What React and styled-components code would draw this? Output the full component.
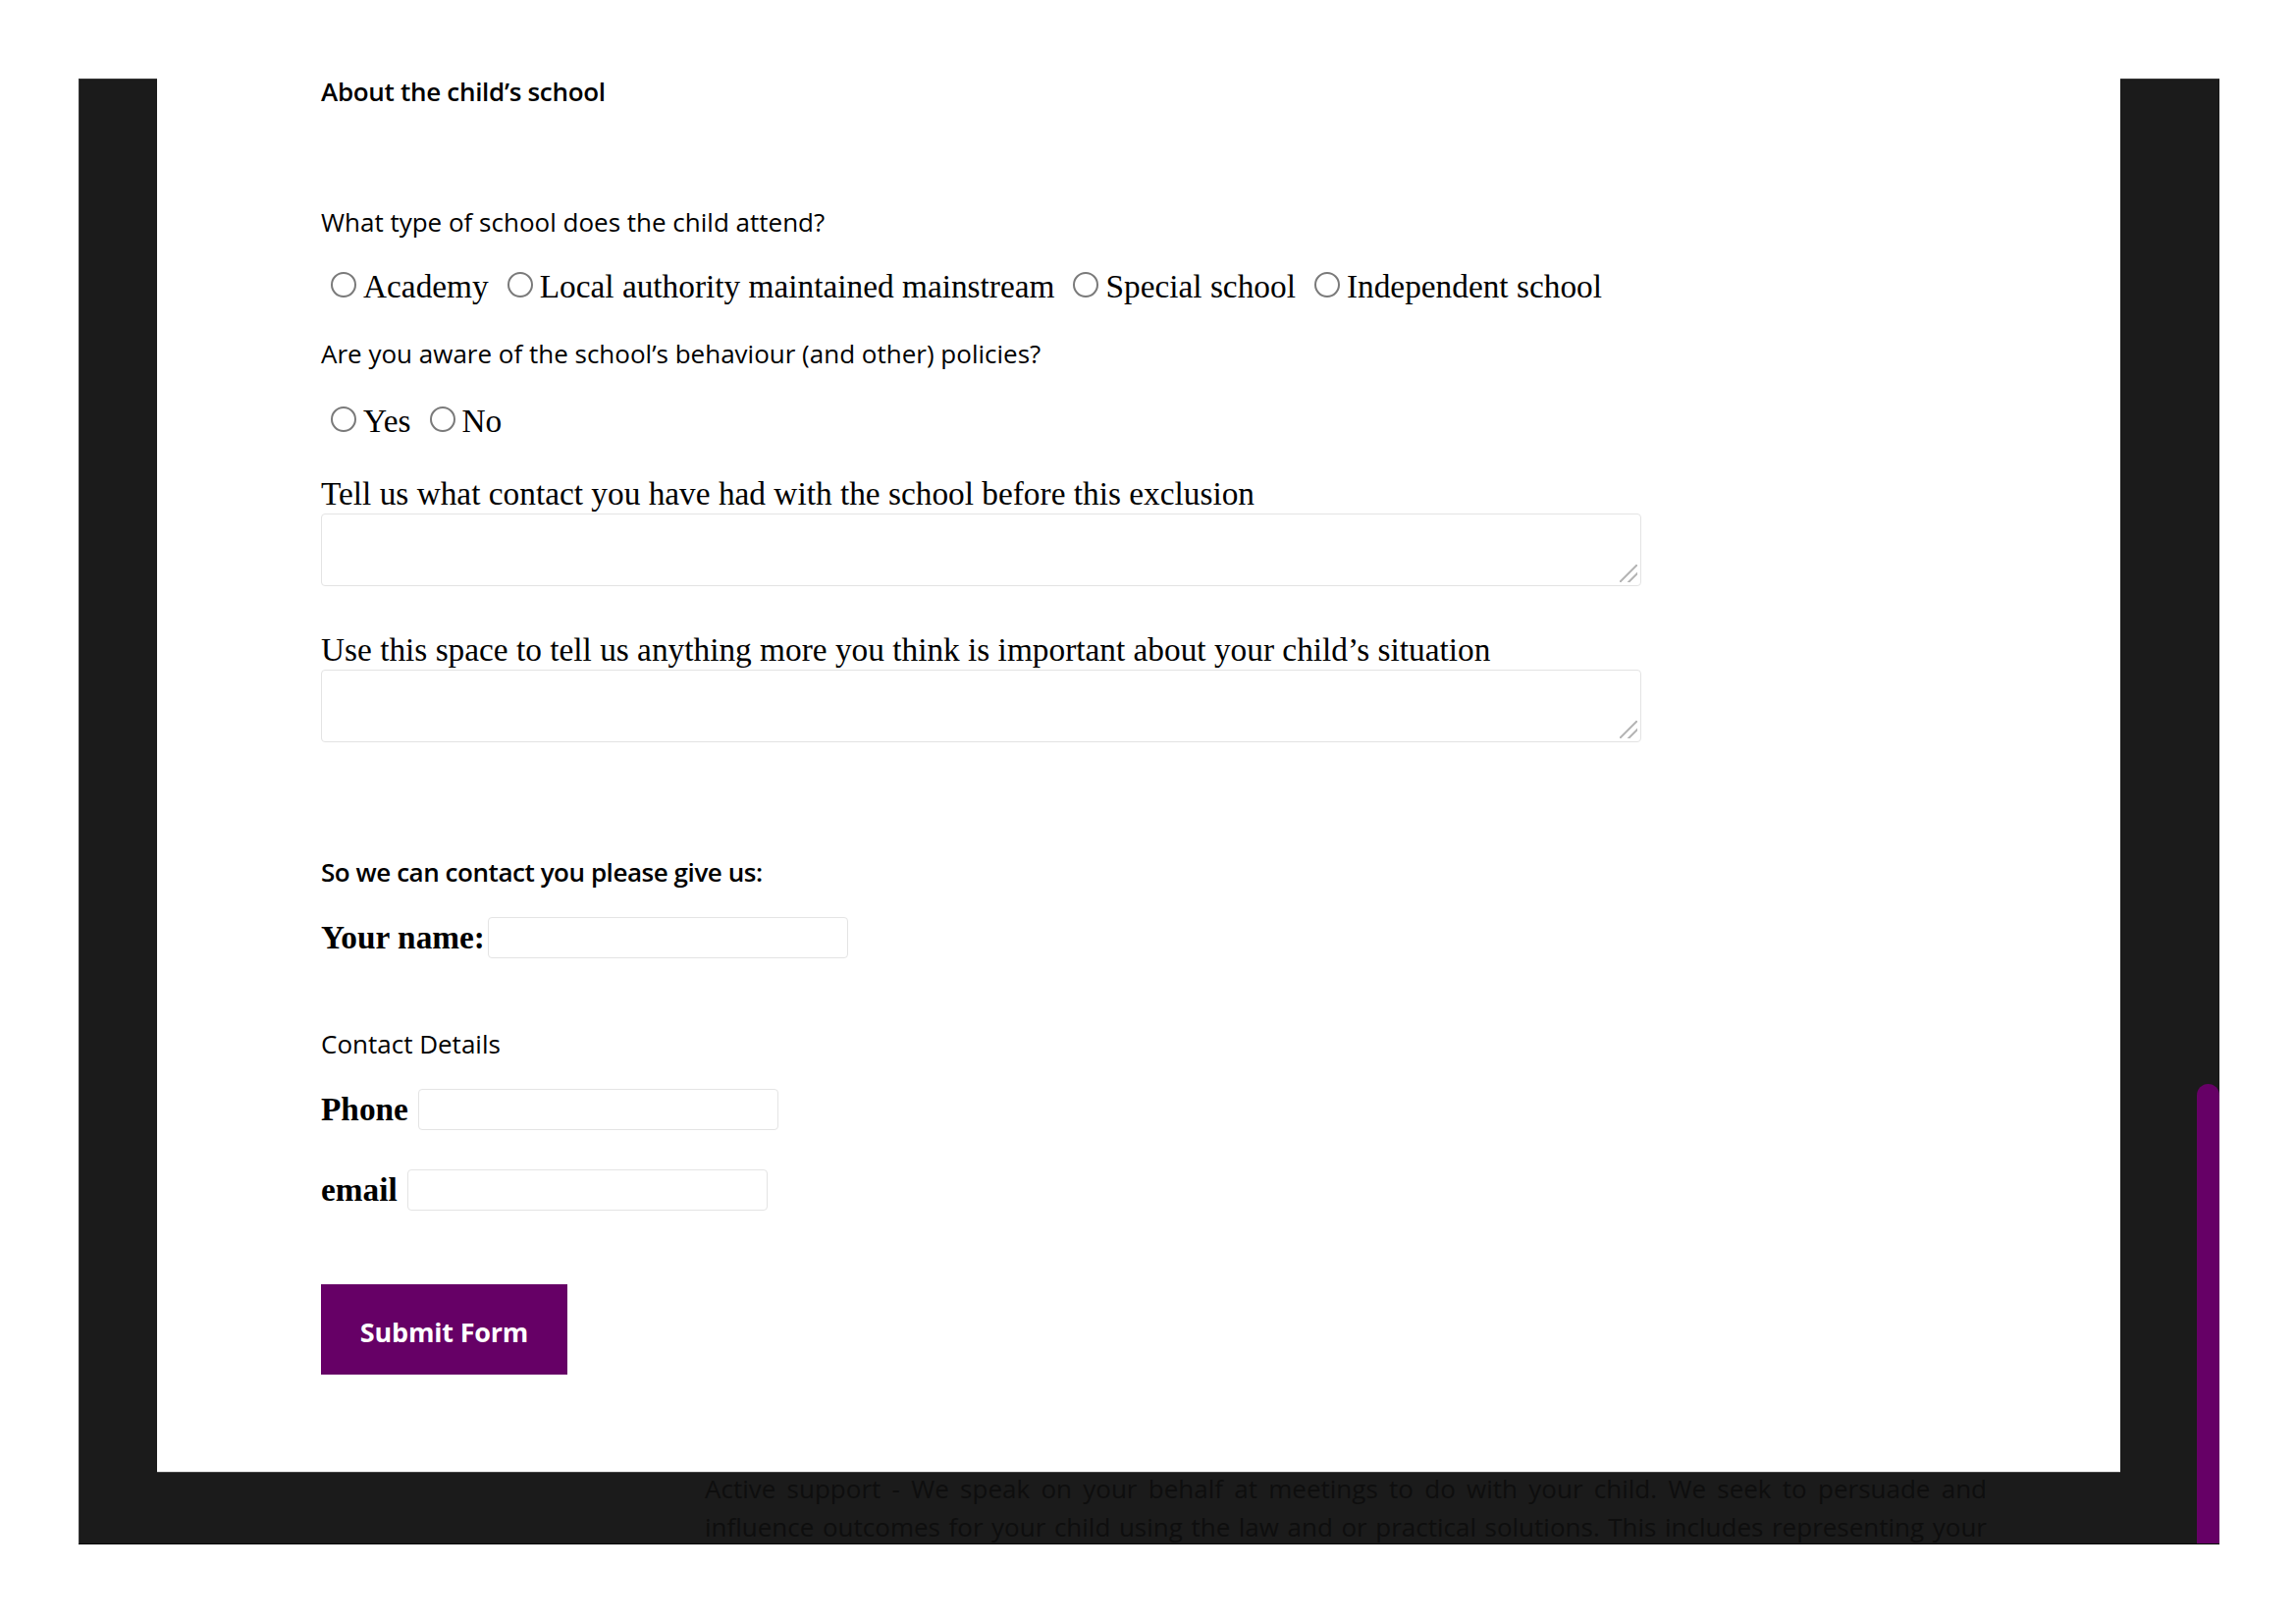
import React from "react";
import styled, { createGlobalStyle } from "styled-components";

const GlobalStyle = createGlobalStyle`
  html, body {
    margin: 0;
    padding: 0;
    background: #ffffff;
  }
  body {
    font-family: "Liberation Serif", "Times New Roman", serif;
    color: #000;
  }
  *, *::before, *::after {
    box-sizing: border-box;
  }
`;

const Page = styled.div`
  padding: 80px 0 0 80px;
  min-height: 1653px;
`;

const Frame = styled.div`
  width: 2181px;
  display: grid;
  grid-template-columns: 80px 2000px 78px 23px;
  grid-template-rows: 1419px 73px;
  background: #1b1b1b;
  border-bottom: 1px solid #050505;
  box-shadow: inset 1px 1px 0 #383838;
`;

const Panel = styled.main`
  grid-column: 2;
  grid-row: 1;
  position: relative;
  z-index: 1;
  background: #ffffff;
  box-shadow: 0 1px 0 #474747;
  padding-left: 167px;
`;

const Backdrop = styled.div`
  grid-column: 1 / 4;
  grid-row: 2;
  overflow: hidden;
  padding-left: 638px;
`;

const BackdropText = styled.p`
  margin: -2px 0 0;
  width: 1306px;
  font-family: "Open Sans", "Noto Sans", sans-serif;
  font-size: 26px;
  line-height: 39px;
  color: #0e0e0e;
`;

const JustifiedLine = styled.span`
  display: block;
  text-align: justify;
  text-align-last: justify;
  white-space: nowrap;
`;

const ScrollTrack = styled.div`
  grid-column: 4;
  grid-row: 1 / 3;
  display: flex;
  flex-direction: column;
  justify-content: flex-end;
`;

const ScrollThumb = styled.div`
  height: 468px;
  background: #660066;
  border-radius: 12px 12px 0 0;
`;

const Heading = styled.h4`
  margin: 0;
  font-family: "Open Sans", "Noto Sans", sans-serif;
  font-size: 26px;
  font-weight: 600;
  line-height: 26px;
  letter-spacing: -0.3px;
`;

const Question = styled.p`
  margin: ${(p) => p.$top}px 0 0;
  font-family: "Open Sans", "Noto Sans", sans-serif;
  font-size: 26px;
  font-weight: ${(p) => p.$weight || 400};
  letter-spacing: ${(p) => p.$tracking || 0}px;
  line-height: 36px;
`;

const OptionRow = styled.div`
  display: flex;
  gap: 9px;
  margin-top: ${(p) => p.$top}px;
  font-size: 33.33px;
  line-height: 36px;
`;

const Option = styled.label`
  display: inline-flex;
  align-items: center;
  white-space: nowrap;
`;

const Radio = styled.input.attrs({ type: "radio" })`
  appearance: none;
  -webkit-appearance: none;
  flex: none;
  width: 26px;
  height: 26px;
  margin: 0 7px 4px 10px;
  border: 2px solid #7a7a7a;
  border-radius: 50%;
  background: #fff;
`;

const Prompt = styled.label`
  display: block;
  margin-top: ${(p) => p.$top}px;
  font-size: 33.33px;
  line-height: 36px;
`;

const TextBox = styled.textarea`
  display: block;
  width: 1345px;
  height: 74px;
  margin: 2px 0 0;
  border: 1px solid #e3e3e3;
  border-radius: 4px;
  resize: none;
  background-color: #fff;
  background-image: linear-gradient(
    135deg,
    transparent 0 47%,
    #b9b9b9 47% 53%,
    transparent 53% 72%,
    #b9b9b9 72% 78%,
    transparent 78%
  );
  background-size: 18px 18px;
  background-position: right 3px bottom 3px;
  background-repeat: no-repeat;
  font: inherit;
`;

const FieldRow = styled.div`
  display: flex;
  align-items: center;
  gap: ${(p) => p.$gap}px;
  margin-top: ${(p) => p.$top}px;
`;

const FieldLabel = styled.label`
  font-size: 33.33px;
  font-weight: 700;
  line-height: 36px;
  white-space: nowrap;
`;

const TextInput = styled.input`
  width: 367px;
  height: 42px;
  margin: 0;
  border: 1px solid #e4e4e4;
  border-radius: 4px;
  background: #fff;
`;

const SubmitButton = styled.button`
  display: block;
  width: 251px;
  height: 92px;
  margin-top: 75px;
  padding: 4px 0 0;
  border: none;
  background: #660066;
  color: #ffffff;
  font-family: "Open Sans", "Noto Sans", sans-serif;
  font-size: 27px;
  font-weight: 700;
  letter-spacing: -0.2px;
`;

export default function App() {
  return (
    <>
      <GlobalStyle />
      <Page>
        <Frame>
          <Panel>
            <Heading>About the child’s school</Heading>
            <Question $top={102}>What type of school does the child attend?</Question>
            <OptionRow $top={30}>
              <Option><Radio name="type" />Academy</Option>
              <Option><Radio name="type" />Local authority maintained mainstream</Option>
              <Option><Radio name="type" />Special school</Option>
              <Option><Radio name="type" />Independent school</Option>
            </OptionRow>
            <Question $top={32}>Are you aware of the school’s behaviour (and other) policies?</Question>
            <OptionRow $top={33}>
              <Option><Radio name="aware" />Yes</Option>
              <Option><Radio name="aware" />No</Option>
            </OptionRow>
            <Prompt $top={38}>Tell us what contact you have had with the school before this exclusion</Prompt>
            <TextBox />
            <Prompt $top={47}>Use this space to tell us anything more you think is important about your child’s situation</Prompt>
            <TextBox />
            <Question $top={114} $weight={600} $tracking={-0.45}>So we can contact you please give us:</Question>
            <FieldRow $top={28} $gap={3}>
              <FieldLabel>Your name:</FieldLabel>
              <TextInput type="text" />
            </FieldRow>
            <Question $top={69}>Contact Details</Question>
            <FieldRow $top={28} $gap={10}>
              <FieldLabel>Phone</FieldLabel>
              <TextInput type="tel" />
            </FieldRow>
            <FieldRow $top={40} $gap={10}>
              <FieldLabel>email</FieldLabel>
              <TextInput type="email" />
            </FieldRow>
            <SubmitButton type="button">Submit Form</SubmitButton>
          </Panel>
          <Backdrop>
            <BackdropText>
              <JustifiedLine>Active support - We speak on your behalf at meetings to do with your child. We seek to persuade and</JustifiedLine>
              <JustifiedLine>influence outcomes for your child using the law and or practical solutions. This includes representing your</JustifiedLine>
            </BackdropText>
          </Backdrop>
          <ScrollTrack>
            <ScrollThumb />
          </ScrollTrack>
        </Frame>
      </Page>
    </>
  );
}
